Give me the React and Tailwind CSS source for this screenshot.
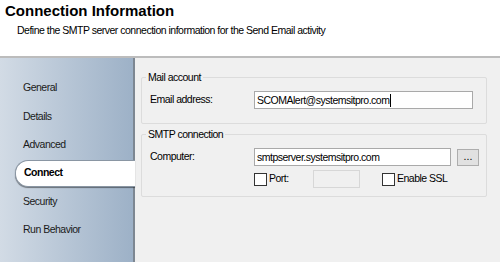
export default function App() {
  const items = ["General", "Details", "Advanced", "Connect", "Security", "Run Behavior"];
  return (
    <div className="w-[500px] h-[262px] overflow-hidden flex flex-col bg-white text-black" style={{ fontFamily: '"Liberation Sans", Arial, sans-serif' }}>
      <div className="h-[56px] shrink-0 bg-white">
        <div className="pl-[5px] pt-[2px] text-[15px] font-bold leading-[18px]">Connection Information</div>
        <div className="pl-[17px] pt-[4px] text-[10.5px] tracking-[-0.5px] leading-[13px]">Define the SMTP server connection information for the Send Email activity</div>
      </div>
      <div className="h-[2px] shrink-0 bg-[#bcbcbc]" />
      <div className="flex flex-1 min-h-0 text-[10.5px] tracking-[-0.5px]">
        <div className="w-[133px] shrink-0 bg-gradient-to-r from-[#d2dbe5] to-[#9db1c7] pt-[16px]">
          {items.map((it) =>
            it === "Connect" ? (
              <div key={it} className="h-[28.4px] flex items-center pl-[15px] -mr-[2px] relative z-10">
                <div className="h-[27px] w-full flex items-center pl-[8px] bg-white rounded-l-[13px] border border-r-0 border-[#8a96a3] shadow-[0_1px_1px_rgba(0,0,0,0.45)] font-bold">
                  {it}
                </div>
              </div>
            ) : (
              <div key={it} className="h-[28.4px] flex items-center pl-[23px] text-[#1a1a1a]">{it}</div>
            )
          )}
        </div>
        <div className="w-[2px] shrink-0 bg-[#7d8792]" />
        <div className="flex-1 bg-[#f0f0f0] pl-[6px] pt-[19px]">
          <div className="w-[346px] h-[47px] border border-[#dcdcdc] rounded-[2px]">
            <div className="-mt-[7px] h-[13px] leading-[13px] ml-[4px] px-[2px] bg-[#f0f0f0] w-fit">Mail account</div>
            <div className="mt-[7px] flex items-center pl-[8px]">
              <div className="w-[104px]">Email address:</div>
              <div className="w-[219px] h-[18px] bg-white border border-[#a9a9a9] flex items-center pl-[2px] leading-[13px]">
                SCOMAlert@systemsitpro.com<span className="inline-block w-px h-[13px] bg-black ml-px" />
              </div>
            </div>
          </div>
          <div className="mt-[10px] w-[346px] h-[63px] border border-[#dcdcdc] rounded-[2px]">
            <div className="-mt-[7px] h-[13px] leading-[13px] ml-[4px] px-[2px] bg-[#f0f0f0] w-fit">SMTP connection</div>
            <div className="mt-[7px] flex items-center pl-[8px]">
              <div className="w-[104px]">Computer:</div>
              <div className="w-[197px] h-[18px] bg-white border border-[#a9a9a9] flex items-center pl-[2px] leading-[13px]">
                smtpserver.systemsitpro.com
              </div>
              <div className="ml-[6px] w-[22px] h-[17px] bg-[#e1e1e1] border border-[#adadad] flex items-center justify-center leading-[10px] pb-[3px] tracking-normal">...</div>
            </div>
            <div className="mt-[4px] flex items-center pl-[112px] h-[18px]">
              <div className="w-[13px] h-[13px] bg-white border border-[#333]" />
              <div className="ml-[2px] w-[44px]">Port:</div>
              <div className="w-[47px] h-[18px] bg-[#f0f0f0] border border-[#d7d7d7]" />
              <div className="ml-[22px] w-[13px] h-[13px] bg-white border border-[#333]" />
              <div className="ml-[2px]">Enable SSL</div>
            </div>
          </div>
        </div>
      </div>
    </div>
  );
}
